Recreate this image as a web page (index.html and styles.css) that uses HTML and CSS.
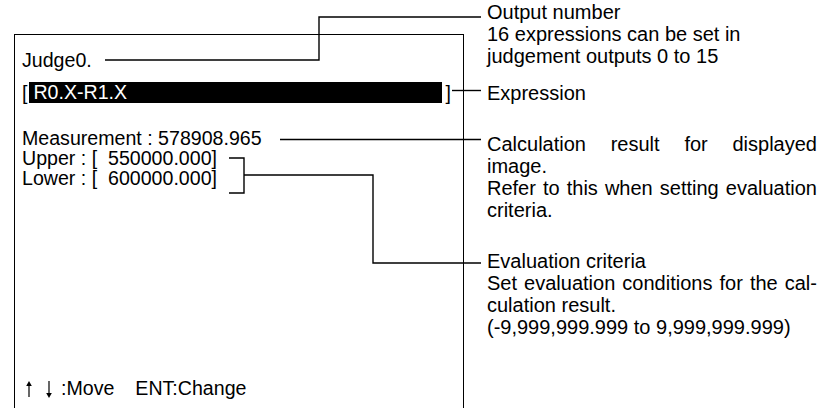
FILE: index.html
```html
<html>
  <head>
    <meta charset="utf-8" />
    <title>Judge expression</title>
    <link rel="stylesheet" href="styles.css">
  </head>
  <body>
    <div class="figure">
      <div class="screen">
        <div class="row judge">Judge0.</div>
        <div class="expr">
          <span>[</span><span class="bar">R0.X-R1.X</span><span class="close">]</span>
        </div>
        <div class="row meas">Measurement : 578908.965</div>
        <div class="row">Upper : [  550000.000]</div>
        <div class="row">Lower : [  600000.000]</div>
        <div class="keys">
          <svg class="arrow up" width="10" height="17" viewBox="0 0 10 17">
            <line x1="5" y1="4" x2="5" y2="16" stroke="#000" stroke-width="1.2" />
            <polygon points="5,0 2.2,5 7.8,5" fill="#000" />
          </svg>
          <svg class="arrow down" width="10" height="17" viewBox="0 0 10 17">
            <line x1="5" y1="0" x2="5" y2="12" stroke="#000" stroke-width="1.2" />
            <polygon points="5,17 2.2,12 7.8,12" fill="#000" />
          </svg>
          <span class="key">:Move</span>
          <span class="key ent">ENT:Change</span>
        </div>
      </div>

      <div class="notes">
        <p class="note n-output">Output number<br>16 expressions can be set in<br>judgement outputs 0 to 15</p>
        <p class="note n-expr">Expression</p>
        <p class="note n-calc">Calculation result for displayed image.<br>Refer to this when setting evaluation criteria.</p>
        <p class="note n-eval">Evaluation criteria<br>Set evaluation conditions for the cal&shy;culation result.<br>(-9,999,999.999 to 9,999,999.999)</p>
      </div>

      <!-- leader lines -->
      <svg class="leaders" width="825" height="408" viewBox="0 0 825 408">
        <g fill="none" stroke="#000" stroke-width="1.4">
          <polyline points="105,60 319,60 319,17 481,17" />
          <line x1="452" y1="90.5" x2="481" y2="90.5" />
          <line x1="280" y1="139.5" x2="481" y2="139.5" />
          <polyline points="229,158 244,158 244,193 229,193" />
          <polyline points="244,175 373,175 373,263 481,263" />
        </g>
      </svg>
    </div>
  </body>
</html>
```

FILE: styles.css
```css
body {
  margin: 0;
  background: #fff;
}

.figure {
  position: relative;
  width: 825px;
  height: 408px;
  overflow: hidden;
  display: flex;
  align-items: flex-start;
  font-family: "Liberation Sans", Arial, sans-serif;
  color: #000;
}

.screen {
  margin: 34px 0 0 14px;
  width: 450px;
  height: 420px;
  flex: none;
  border: 1px solid #000;
  padding: 15px 0 0 7px;
  box-sizing: border-box;
  font-size: 19.6px;
  line-height: 20px;
}

.row {
  white-space: pre;
  height: 20px;
}

.expr {
  display: flex;
  align-items: center;
  height: 21px;
  margin-top: 12px;
}

.bar {
  display: block;
  width: 409px;
  height: 21px;
  margin-left: 2px;
  padding-left: 4px;
  background: #000;
  color: #fff;
}

.close {
  margin-left: 3px;
}

.meas {
  margin-top: 25px;
}

.keys {
  display: flex;
  align-items: flex-start;
  height: 20px;
  margin-top: 190px;
}

.arrow {
  flex: none;
  margin-top: 3px;
}

.up {
  margin-left: 2px;
}

.down {
  margin-left: 10px;
}

.key {
  margin-left: 7px;
}

.ent {
  margin-left: 21px;
}

.notes {
  margin-left: 23px;
  width: 330px;
  flex: none;
  padding-top: 1px;
  font-size: 20px;
  line-height: 22px;
}

.note {
  margin: 0;
  text-align: justify;
  hyphens: manual;
}

.n-expr {
  margin-top: 15px;
}

.n-calc {
  margin-top: 29px;
}

.n-eval {
  margin-top: 29px;
}

.leaders {
  position: absolute;
  left: 0;
  top: 0;
  pointer-events: none;
}
```
